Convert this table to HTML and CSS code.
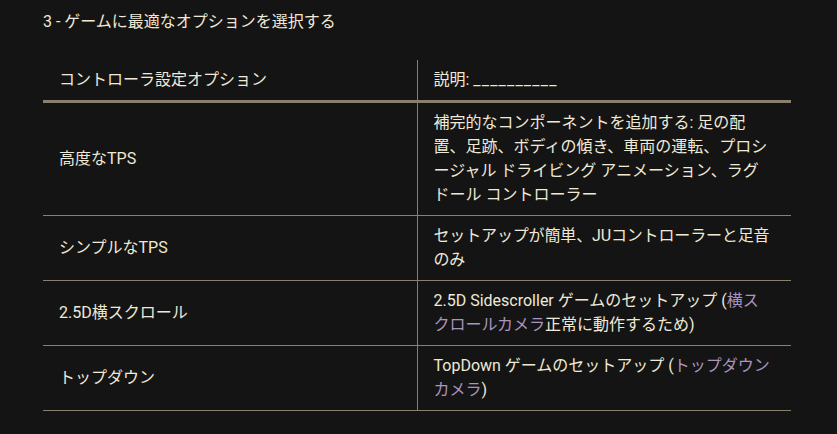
FILE: index.html
```html
<!DOCTYPE html>
<html lang="ja">
<head>
<meta charset="utf-8">
<link rel="stylesheet" href="styles.css">
</head>
<body>
<main class="page">
  <p class="title">3 - ゲームに最適なオプションを選択する</p>
  <table class="options">
    <colgroup><col class="c1"><col class="c2"></colgroup>
    <thead>
      <tr><th>コントローラ設定オプション</th><th>説明: <span class="blank">__________</span></th></tr>
    </thead>
    <tbody>
      <tr><td>高度なTPS</td><td>補完的なコンポーネントを追加する: 足の配置、足跡、ボディの傾き、車両の運転、プロシージャル ドライビング アニメーション、ラグドール コントローラー</td></tr>
      <tr><td>シンプルなTPS</td><td class="tight">セットアップが簡単、JUコントローラーと足音のみ</td></tr>
      <tr><td>2.5D横スクロール</td><td>2.5D Sidescroller ゲームのセットアップ (<a class="link">横スクロールカメラ</a>正常に動作するため)</td></tr>
      <tr><td>トップダウン</td><td>TopDown ゲームのセットアップ (<a class="link">トップダウンカメラ</a>)</td></tr>
    </tbody>
  </table>
</main>
</body>
</html>
```

FILE: styles.css
```css
html, body {
  margin: 0;
  padding: 0;
  background: #141414;
}
body {
  font-family: "Roboto", "Noto Sans CJK JP", sans-serif;
  font-size: 16px;
  line-height: 24px;
  color: #efe9d6;
}
.page {
  padding: 10px 46px 0 43px;
}
.title {
  margin: 0 0 26px 0;
}
.options {
  width: 748px;
  border-collapse: collapse;
  table-layout: fixed;
}
.c1, .c2 { width: 50%; }
.options th {
  font-weight: normal;
  text-align: left;
  padding: 8px 16px;
  border-bottom: 3px solid #8a7f6c;
}
.options td {
  padding: 8px 20px 8px 16px;
  border-bottom: 1px solid #8a7f6c;
  vertical-align: middle;
}
.options th + th,
.options td + td {
  border-left: 1px solid #8a7f6c;
}
.options td.tight {
  letter-spacing: -0.15px;
}
.blank {
  letter-spacing: 1.2px;
}
.link {
  color: #a995c0;
  text-decoration: none;
}
```
